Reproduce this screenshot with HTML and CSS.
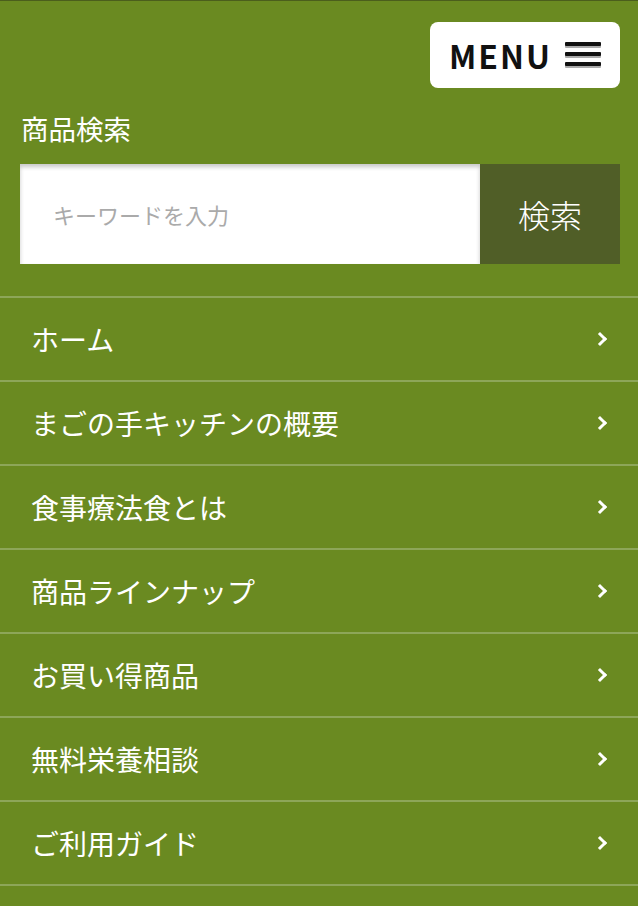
FILE: index.html
```html
<!DOCTYPE html>
<html lang="ja">
<head>
  <meta charset="UTF-8" />
  <meta name="viewport" content="width=device-width, initial-scale=1.0" />
  <title>メニュー - まごの手キッチン</title>
  <link rel="stylesheet" href="styles.css">
</head>
<body>
  <div class="drawer">
    <div class="drawer-top">
      <button class="menu-button">
        <span>MENU</span>
        <svg class="burger" width="36" height="26" viewBox="0 0 36 26">
          <rect x="0" y="2" width="36" height="4" rx="1" fill="#aaa" />
          <rect x="0" y="0" width="36" height="4" rx="1" fill="#111" />
          <rect x="0" y="12" width="36" height="4" rx="1" fill="#aaa" />
          <rect x="0" y="10" width="36" height="4" rx="1" fill="#111" />
          <rect x="0" y="22" width="36" height="4" rx="1" fill="#aaa" />
          <rect x="0" y="20" width="36" height="4" rx="1" fill="#111" />
        </svg>
      </button>
    </div>

    <div class="search-section">
      <h2>商品検索</h2>
      <form class="search-form" onsubmit="return false">
        <input type="text" placeholder="キーワードを入力">
        <button type="submit">検索</button>
      </form>
    </div>

    <ul class="nav-list">
      <li><a href="#">ホーム</a></li>
      <li><a href="#">まごの手キッチンの概要</a></li>
      <li><a href="#">食事療法食とは</a></li>
      <li><a href="#">商品ラインナップ</a></li>
      <li><a href="#">お買い得商品</a></li>
      <li><a href="#">無料栄養相談</a></li>
      <li><a href="#">ご利用ガイド</a></li>
    </ul>
  </div>
</body>
</html>
```

FILE: styles.css
```css
body {
  margin: 0;
  padding: 0;
  background: #6a8a21;
  font-family: "Noto Sans CJK JP", "Noto Sans", sans-serif;
  color: white;
}
.drawer {
  border-top: 1px solid #4b5e1c;
  background: #6a8a21;
  min-height: 905px;
}
.drawer-top {
  display: flex;
  justify-content: flex-end;
  padding: 21px 18px 0 20px;
}
.menu-button {
  display: flex;
  align-items: center;
  gap: 13px;
  width: 190px;
  height: 66px;
  padding: 0 0 0 19px;
  background: white;
  border: none;
  border-radius: 8px;
  font-family: "Noto Sans CJK JP", sans-serif;
  font-weight: bold;
  font-size: 32px;
  letter-spacing: 2px;
  color: #111;
  cursor: pointer;
}
.burger {
  display: block;
}
.search-section {
  padding: 0 18px 32px 20px;
}
.search-section h2 {
  margin: 20px 0 16px 1px;
  font-size: 27.5px;
  font-weight: normal;
  line-height: 40px;
}
.search-form {
  display: flex;
  height: 100px;
}
.search-form input {
  flex: 1;
  min-width: 0;
  border: none;
  margin: 0;
  padding: 0 0 0 33px;
  font-family: "Noto Sans CJK JP", sans-serif;
  font-size: 22px;
  color: #333;
  box-shadow: inset 0 3px 4px rgba(0,0,0,0.22);
  outline: none;
}
.search-form input::placeholder {
  color: #aaa;
}
.search-form button {
  width: 140px;
  border: none;
  background: #505e27;
  color: white;
  font-family: "Noto Sans CJK JP", sans-serif;
  font-size: 32px;
  font-weight: 300;
  cursor: pointer;
}
.nav-list {
  list-style: none;
  margin: 0;
  padding: 0;
  border-bottom: 2px solid #8da659;
}
.nav-list li {
  border-top: 2px solid #8da659;
}
.nav-list a {
  display: flex;
  align-items: center;
  justify-content: space-between;
  height: 82px;
  padding: 0 29px 0 31px;
  color: white;
  text-decoration: none;
  font-size: 28px;
}
.nav-list a::after {
  content: "";
  width: 7px;
  height: 7px;
  border-top: 3px solid white;
  border-right: 3px solid white;
  transform: rotate(45deg);
  margin-right: 4px;
}
```
